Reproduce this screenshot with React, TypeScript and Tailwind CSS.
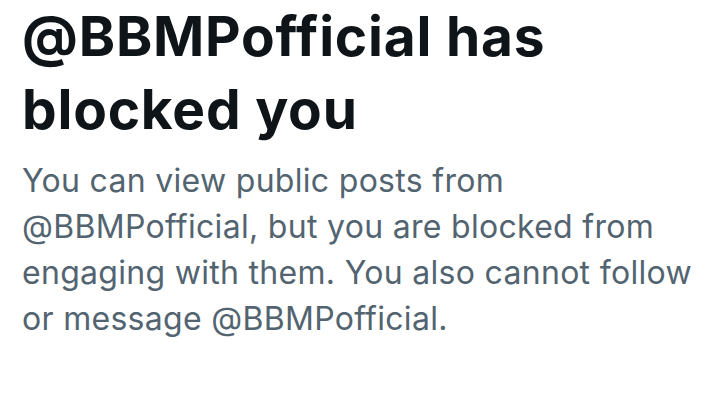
export default function App() {
  return (
    <div className="w-[718px] h-[410px] bg-white overflow-hidden px-[22px] font-['Inter','Noto_Sans',sans-serif]">
      <h1 className="text-[55px] leading-[73px] font-bold tracking-[0.8px] text-[#0f1419]">
        @BBMPofficial has blocked you
      </h1>
      <p className="mt-[12px] text-[32px] leading-[46px] tracking-[0.3px] text-[#536471] w-[690px]">
        You can view public posts from @BBMPofficial, but you are blocked from engaging with them. You also cannot follow or message @BBMPofficial.
      </p>
    </div>
  );
}
